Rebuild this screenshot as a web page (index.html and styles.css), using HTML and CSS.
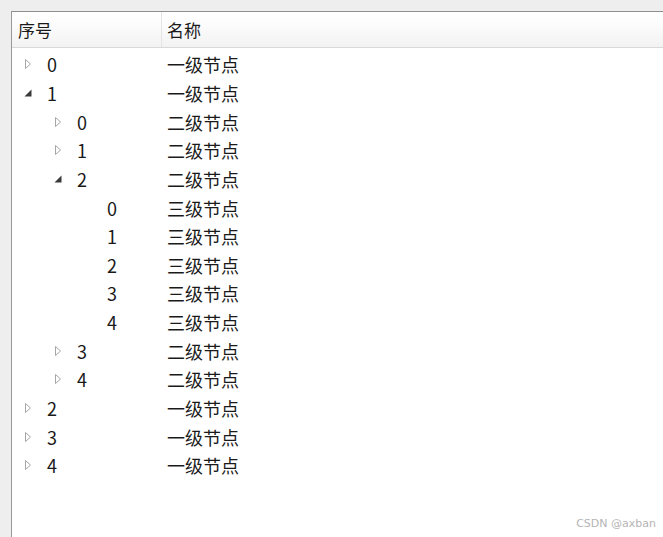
FILE: index.html
```html
<!DOCTYPE html>
<html lang="zh-CN">
<head>
<meta charset="utf-8">
<link rel="stylesheet" href="styles.css">
</head>
<body>
<div class="frame">
  <div class="header">
    <div class="hcell col1">序号</div>
    <div class="hcell col2">名称</div>
  </div>
  <div class="rows">
    <div class="row"><div class="c1 l0"><svg class="tw" viewBox="0 0 9 12"><path class="closed" d="M1.5 1.5 L6.5 6 L1.5 10.5 Z"/></svg><span class="num">0</span></div><div class="c2">一级节点</div></div>
    <div class="row"><div class="c1 l0"><svg class="tw" viewBox="0 0 9 12"><path class="open" d="M7.5 2.5 L7.5 9.5 L0.5 9.5 Z"/></svg><span class="num">1</span></div><div class="c2">一级节点</div></div>
    <div class="row"><div class="c1 l1"><svg class="tw" viewBox="0 0 9 12"><path class="closed" d="M1.5 1.5 L6.5 6 L1.5 10.5 Z"/></svg><span class="num">0</span></div><div class="c2">二级节点</div></div>
    <div class="row"><div class="c1 l1"><svg class="tw" viewBox="0 0 9 12"><path class="closed" d="M1.5 1.5 L6.5 6 L1.5 10.5 Z"/></svg><span class="num">1</span></div><div class="c2">二级节点</div></div>
    <div class="row"><div class="c1 l1"><svg class="tw" viewBox="0 0 9 12"><path class="open" d="M7.5 2.5 L7.5 9.5 L0.5 9.5 Z"/></svg><span class="num">2</span></div><div class="c2">二级节点</div></div>
    <div class="row"><div class="c1 l2"><span class="tw"></span><span class="num">0</span></div><div class="c2">三级节点</div></div>
    <div class="row"><div class="c1 l2"><span class="tw"></span><span class="num">1</span></div><div class="c2">三级节点</div></div>
    <div class="row"><div class="c1 l2"><span class="tw"></span><span class="num">2</span></div><div class="c2">三级节点</div></div>
    <div class="row"><div class="c1 l2"><span class="tw"></span><span class="num">3</span></div><div class="c2">三级节点</div></div>
    <div class="row"><div class="c1 l2"><span class="tw"></span><span class="num">4</span></div><div class="c2">三级节点</div></div>
    <div class="row"><div class="c1 l1"><svg class="tw" viewBox="0 0 9 12"><path class="closed" d="M1.5 1.5 L6.5 6 L1.5 10.5 Z"/></svg><span class="num">3</span></div><div class="c2">二级节点</div></div>
    <div class="row"><div class="c1 l1"><svg class="tw" viewBox="0 0 9 12"><path class="closed" d="M1.5 1.5 L6.5 6 L1.5 10.5 Z"/></svg><span class="num">4</span></div><div class="c2">二级节点</div></div>
    <div class="row"><div class="c1 l0"><svg class="tw" viewBox="0 0 9 12"><path class="closed" d="M1.5 1.5 L6.5 6 L1.5 10.5 Z"/></svg><span class="num">2</span></div><div class="c2">一级节点</div></div>
    <div class="row"><div class="c1 l0"><svg class="tw" viewBox="0 0 9 12"><path class="closed" d="M1.5 1.5 L6.5 6 L1.5 10.5 Z"/></svg><span class="num">3</span></div><div class="c2">一级节点</div></div>
    <div class="row"><div class="c1 l0"><svg class="tw" viewBox="0 0 9 12"><path class="closed" d="M1.5 1.5 L6.5 6 L1.5 10.5 Z"/></svg><span class="num">4</span></div><div class="c2">一级节点</div></div>
  </div>
  <div class="watermark">CSDN @axban</div>
</div>
</body>
</html>
```
FILE: styles.css
```css
html, body {
  margin: 0;
  padding: 0;
  height: 100%;
  overflow: hidden;
}
body {
  background: #eeeeee;
  font-family: "Noto Sans CJK SC", "Noto Sans", sans-serif;
  color: #1a1a1a;
  padding: 11px 0 0 11px;
  box-sizing: border-box;
}
.frame {
  position: relative;
  height: 100%;
  background: #ffffff;
  border-top: 1px solid #8e8e8e;
  border-left: 1px solid #9a9a9a;
  box-sizing: border-box;
}
.header {
  display: flex;
  height: 35px;
  background: linear-gradient(#ffffff 0%, #fbfbfb 45%, #f2f2f2 100%);
  border-bottom: 1px solid #d8d8d8;
}
.hcell {
  display: flex;
  align-items: center;
  font-size: 17px;
  line-height: 1;
}
.col1 {
  width: 150px;
  padding-left: 6px;
  box-sizing: border-box;
  border-right: 1px solid #e4e4e4;
}
.col2 {
  padding-left: 5px;
}
.rows {
  padding-top: 2px;
}
.row {
  display: flex;
  height: 28.65px;
  align-items: center;
}
.c1 {
  width: 151px;
  display: flex;
  align-items: center;
  box-sizing: border-box;
  font-size: 18px;
}
.c1.l0 { padding-left: 12px; }
.c1.l1 { padding-left: 42px; }
.c1.l2 { padding-left: 72px; }
.tw {
  display: block;
  width: 9px;
  height: 12px;
  margin-right: 14px;
  flex: none;
}
.tw .closed {
  fill: #ffffff;
  stroke: #a6a6a6;
  stroke-width: 1;
  stroke-linejoin: miter;
}
.tw .open {
  fill: #3a3a3a;
  stroke: none;
}
.num {
  line-height: 1;
}
.c2 {
  padding-left: 4px;
  font-size: 18px;
  line-height: 1;
}
.watermark {
  position: absolute;
  right: 7px;
  bottom: 7px;
  font-family: "DejaVu Sans", sans-serif;
  font-size: 11px;
  color: #b4b4b4;
}
```
